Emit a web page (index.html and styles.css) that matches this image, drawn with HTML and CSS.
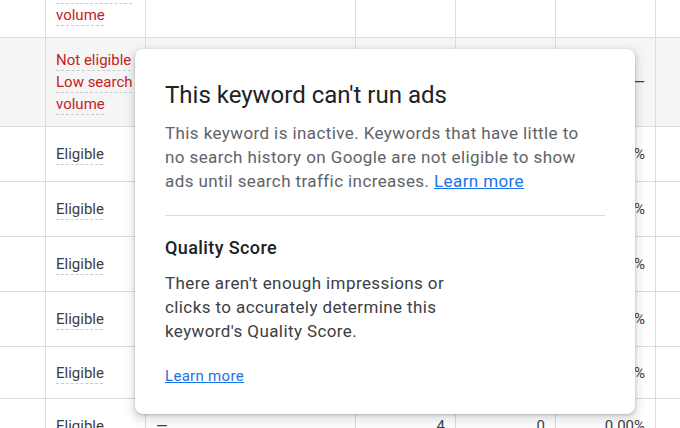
FILE: index.html
```html
<!DOCTYPE html>
<html>
<head>
    <meta charset="utf-8" />
    <title>Keywords</title>
    <link rel="stylesheet" href="styles.css">
</head>
<body>
    <section id="tablewrapper">
        <div class="grid">
            <div class="row tall">
                <div class="cell"></div>
                <div class="cell status"><span class="bad">Not eligible<br>Low search<br>volume</span></div>
                <div class="cell"></div>
                <div class="cell num"></div>
                <div class="cell num"></div>
                <div class="cell num">—</div>
                <div class="cell"></div>
            </div>
            <div class="row tall hover">
                <div class="cell"></div>
                <div class="cell status"><span class="bad">Not eligible<br>Low search<br>volume</span></div>
                <div class="cell">—</div>
                <div class="cell num">0</div>
                <div class="cell num">0</div>
                <div class="cell num">—</div>
                <div class="cell"></div>
            </div>
            <div class="row">
                <div class="cell"></div>
                <div class="cell status"><span class="ok">Eligible</span></div>
                <div class="cell">—</div>
                <div class="cell num">12</div>
                <div class="cell num">0</div>
                <div class="cell num">0.00%</div>
                <div class="cell"></div>
            </div>
            <div class="row">
                <div class="cell"></div>
                <div class="cell status"><span class="ok">Eligible</span></div>
                <div class="cell">—</div>
                <div class="cell num">9</div>
                <div class="cell num">0</div>
                <div class="cell num">0.00%</div>
                <div class="cell"></div>
            </div>
            <div class="row">
                <div class="cell"></div>
                <div class="cell status"><span class="ok">Eligible</span></div>
                <div class="cell">—</div>
                <div class="cell num">7</div>
                <div class="cell num">0</div>
                <div class="cell num">0.00%</div>
                <div class="cell"></div>
            </div>
            <div class="row">
                <div class="cell"></div>
                <div class="cell status"><span class="ok">Eligible</span></div>
                <div class="cell">—</div>
                <div class="cell num">6</div>
                <div class="cell num">0</div>
                <div class="cell num">0.00%</div>
                <div class="cell"></div>
            </div>
            <div class="row short">
                <div class="cell"></div>
                <div class="cell status"><span class="ok">Eligible</span></div>
                <div class="cell">—</div>
                <div class="cell num">5</div>
                <div class="cell num">0</div>
                <div class="cell num">0.00%</div>
                <div class="cell"></div>
            </div>
            <div class="row">
                <div class="cell"></div>
                <div class="cell status"><span class="ok">Eligible</span></div>
                <div class="cell">—</div>
                <div class="cell num">4</div>
                <div class="cell num">0</div>
                <div class="cell num">0.00%</div>
                <div class="cell"></div>
            </div>
        </div>
    </section>

    <div class="popup">
        <h2 class="popup-title">This keyword can't run ads</h2>
        <p class="popup-text">This keyword is inactive. Keywords that have little to<br>no search history on Google are not eligible to show<br>ads until search traffic increases. <a href="#">Learn more</a></p>
        <hr class="popup-divider">
        <h3 class="popup-subtitle">Quality Score</h3>
        <p class="popup-note">There aren't enough impressions or<br>clicks to accurately determine this<br>keyword's Quality Score.</p>
        <a class="popup-link" href="#">Learn more</a>
    </div>
</body>
</html>
```

FILE: styles.css
```css
* {
    padding: 0;
    margin: 0;
    box-sizing: border-box;
}
body {
    font-family: Roboto, "Liberation Sans", sans-serif;
    font-size: 15px;
    color: #3c4043;
    background: #fff;
    overflow: hidden;
}
#tablewrapper {
    height: 428px;
    overflow: hidden;
}
.grid {
    margin-top: -51px;
    width: 700px;
}
.row {
    display: grid;
    grid-template-columns: 46px 100px 210px 100px 100px 100px 1fr;
    height: 55px;
    border-bottom: 1px solid #dadce0;
}
.row.tall {
    height: 89px;
}
.row.short {
    height: 52px;
}
.row.hover {
    background: #f5f5f5;
}
.cell {
    border-right: 1px solid #dadce0;
    display: flex;
    align-items: center;
    padding: 0 10px;
    line-height: 22px;
}
.cell.num {
    justify-content: flex-end;
}
.cell:last-child {
    border-right: none;
}
.status span {
    text-decoration: underline dashed #c9cccf;
    text-decoration-thickness: 1px;
    text-underline-offset: 5px;
}
.bad {
    color: #c5221f;
}
.ok {
    color: #3c4043;
}

/* hover card */
.popup {
    position: absolute;
    left: 135px;
    top: 49px;
    width: 500px;
    padding: 32px 30px 28px;
    background: #fff;
    border-radius: 8px;
    box-shadow: 0 4px 8px 3px rgba(60, 64, 67, .15), 0 1px 3px rgba(60, 64, 67, .3);
}
.popup-title {
    font-size: 24px;
    line-height: 28px;
    font-weight: 400;
    color: #202124;
}
.popup-text {
    margin-top: 12px;
    font-size: 17px;
    letter-spacing: 0.4px;
    line-height: 24px;
    color: #5f6368;
}
.popup-text a,
.popup-link {
    color: #1a73e8;
    text-decoration: underline;
}
.popup-divider {
    border: none;
    border-top: 1px solid #dadce0;
    margin-top: 22px;
}
.popup-subtitle {
    margin-top: 20px;
    font-size: 18px;
    letter-spacing: 0.4px;
    line-height: 24px;
    font-weight: 500;
    color: #202124;
}
.popup-note {
    margin-top: 11px;
    font-size: 17px;
    letter-spacing: 0.4px;
    line-height: 24px;
    color: #3c4043;
}
.popup-link {
    display: inline-block;
    margin-top: 23px;
    font-size: 15px;
    letter-spacing: 0.3px;
    line-height: 20px;
}
```
